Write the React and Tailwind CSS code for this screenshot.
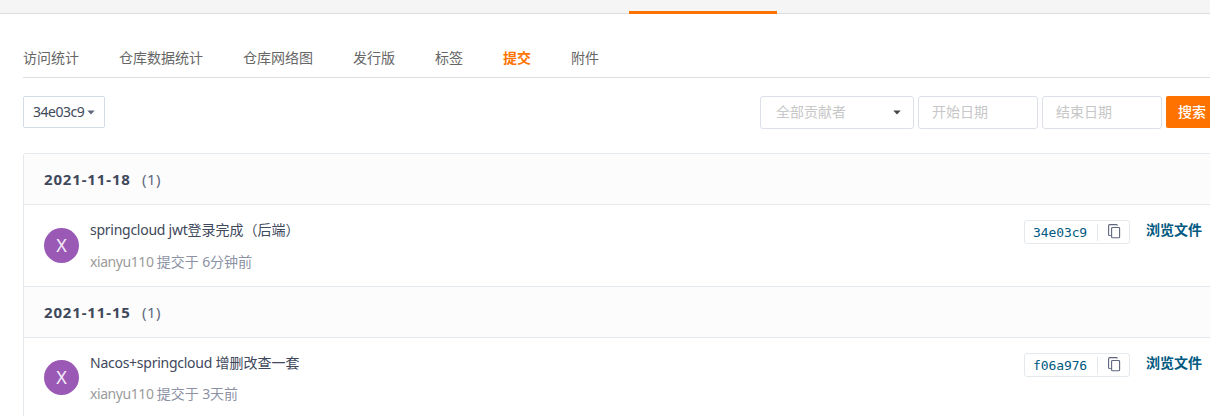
const tabs = ['访问统计', '仓库数据统计', '仓库网络图', '发行版', '标签', '提交', '附件'];

const groups = [
  { date: '2021-11-18', hash: '34e03c9', latin: 'springcloud jwt', text: '登录完成（后端）', time: '6分钟前', first: true },
  { date: '2021-11-15', hash: 'f06a976', latin: 'Nacos+springcloud ', text: '增删改查一套', time: '3天前', first: false },
];

function Caret({ className }) {
  return (
    <svg className={className} width="8" height="5" viewBox="0 0 8 5" fill="currentColor">
      <path d="M0.3 0.5h7.4L4 4.4z" />
    </svg>
  );
}

function CopyIcon() {
  return (
    <svg width="14" height="15" viewBox="0 0 14 15" fill="none" stroke="#60667c" strokeWidth="1.1">
      <path d="M2.8 11.5H1.6a1 1 0 0 1-1-1V1.6a1 1 0 0 1 1-1h6.8a1 1 0 0 1 1 1" />
      <rect x="3.6" y="3.5" width="8" height="10.3" rx="0.9" />
    </svg>
  );
}

function CommitGroup({ group }) {
  return (
    <section>
      <div className="flex h-[51px] items-center border-b border-[#e3e9ed] bg-[#fcfcfc] pl-5">
        <span className="w-[98px] text-[15px] font-bold tracking-[0.85px] text-[#40485b]">{group.date}</span>
        <span className="text-[15px] tracking-[0.4px] text-[#60697f]">(1)</span>
      </div>
      <div className="flex h-[82px] border-b border-[#e3e9ed] pl-5 pt-[15px]">
        <div className={`flex size-[35px] shrink-0 items-center justify-center rounded-full bg-[#9b59b6] text-[18px] text-white/90 ${group.first ? 'mt-2' : 'mt-[7px]'}`}>
          X
        </div>
        <div className="ml-[11px] flex-1 whitespace-pre">
          <div className="text-[14px] leading-5 text-[#40485b]">
            <span className="tracking-[-0.26px]">{group.latin}</span>{group.text}
          </div>
          <div className={`text-[14px] leading-5 text-[#8c92a4] ${group.first ? 'mt-3' : 'mt-[11px]'}`}>
            <span className="tracking-[-0.43px] text-[#9b9b9b]">xianyu110 </span>提交于<span className="tracking-[-0.2px]"> {group.time.slice(0, 1)}</span>{group.time.slice(1)}
          </div>
        </div>
        <div className="flex h-[24px] w-[106px] items-center rounded-[3px] border border-[#e3e9ed]">
          <span className="w-[72px] pl-2 pt-px font-['DejaVu_Sans_Mono',monospace] text-[13px] leading-5 tracking-[-0.1px] text-[#005980]">{group.hash}</span>
          <span className="h-[17px] w-px bg-[#e3e9ed]" />
          <span className="pb-[2px] pl-[10px]"><CopyIcon /></span>
        </div>
        <a className="ml-4 mr-2 whitespace-nowrap text-[14px] font-bold leading-5 text-[#005980]">浏览文件</a>
      </div>
    </section>
  );
}

export default function App() {
  return (
    <div className="h-[416px] w-full overflow-hidden bg-white font-['Noto_Sans','Noto_Sans_CJK_SC',sans-serif]">
      <header className="flex h-[14px] items-end border-b border-[#dcddde] bg-[#f5f5f5]">
        <div className="-mb-px ml-[629px] h-[3px] w-[148px] bg-[#fe7300]" />
      </header>
      <main className="pl-[23px]">
        <nav className="flex h-16 items-center gap-10 border-b border-[#dcddde] pt-[25px] text-[14px] leading-5 text-[#666]">
          {tabs.map((tab) => (
            <a key={tab} className={tab === '提交' ? 'font-bold text-[#fe7300]' : ''}>{tab}</a>
          ))}
        </nav>
        <div className="mt-[18px] flex h-[33px] items-start gap-1">
          <button className="mr-auto flex h-8 w-[82px] items-center gap-[3px] rounded-[2px] border border-[#d6dce5] pl-[9px] text-[14px] text-[#40485b]">
            <span className="w-[51px] pb-0.5 tracking-[-0.5px]">34e03c9</span>
            <Caret className="text-[#60697f]" />
          </button>
          <div className="flex h-[33px] w-[154px] items-center justify-between rounded-[3px] border border-[#dce0ea] pl-[15px] pr-3 text-[14px] text-[#c7c7c7]">
            <span className="pb-0.5">全部贡献者</span>
            <Caret className="text-[#444]" />
          </div>
          <div className="flex h-[33px] w-[120px] items-center rounded-[3px] border border-[#dce0ea] pb-0.5 pl-[13px] text-[14px] text-[#c7c7c7]">开始日期</div>
          <div className="flex h-[33px] w-[120px] items-center rounded-[3px] border border-[#dce0ea] pb-0.5 pl-[13px] text-[14px] text-[#c7c7c7]">结束日期</div>
          <button className="flex h-8 w-[44px] items-center whitespace-nowrap rounded-l-[2px] bg-[#fe7300] pb-px pl-3 text-[14px] font-medium text-white">搜索</button>
        </div>
        <div className="mt-6 rounded-tl-[3px] border-l border-t border-[#e3e9ed]">
          {groups.map((group) => (
            <CommitGroup key={group.date} group={group} />
          ))}
        </div>
      </main>
    </div>
  );
}
